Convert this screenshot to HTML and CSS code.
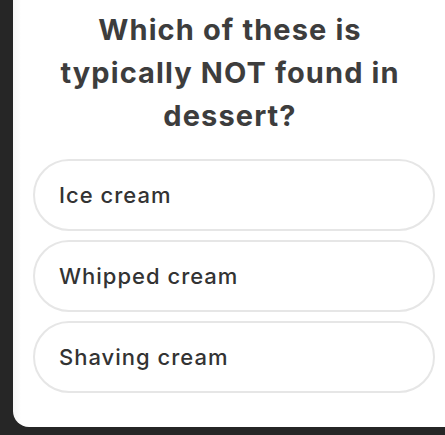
FILE: index.html
```html
<!DOCTYPE html>
<html>
<head>
<meta charset="utf-8">
<link rel="stylesheet" href="styles.css">
</head>
<body>
<div class="screen">
  <div class="card">
    <h1 class="question">Which of these is<br>typically NOT found in<br>dessert?</h1>
    <div class="options">
      <div class="option">Ice cream</div>
      <div class="option">Whipped cream</div>
      <div class="option">Shaving cream</div>
    </div>
  </div>
</div>
</body>
</html>
```
FILE: styles.css
```css
html, body {
  margin: 0;
  padding: 0;
  background: #262626;
}
.screen {
  width: 445px;
  height: 435px;
  overflow: hidden;
  background: #262626;
}
.card {
  margin-left: 13px;
  width: 442px;
  height: 427px;
  box-sizing: border-box;
  background: linear-gradient(to right, #f6f6f6 0px, #ffffff 8px);
  border-bottom-left-radius: 16px;
  padding: 8px 20px 0 20px;
  font-family: "Inter", "Liberation Sans", sans-serif;
}
.question {
  margin: 0 auto;
  width: 402px;
  text-align: center;
  font-size: 29px;
  line-height: 43px;
  font-weight: 700;
  letter-spacing: 1.1px;
  color: #3d3d3d;
  position: relative;
  left: -4px;
}
.options {
  margin-top: 22px;
  display: flex;
  flex-direction: column;
  gap: 9px;
  width: 402px;
}
.option {
  height: 72px;
  box-sizing: border-box;
  border: 2px solid #e6e6e6;
  border-radius: 36px;
  background: #fff;
  display: flex;
  align-items: center;
  padding-left: 24px;
  font-size: 22px;
  font-weight: 500;
  letter-spacing: 1px;
  color: #333;
}
```
